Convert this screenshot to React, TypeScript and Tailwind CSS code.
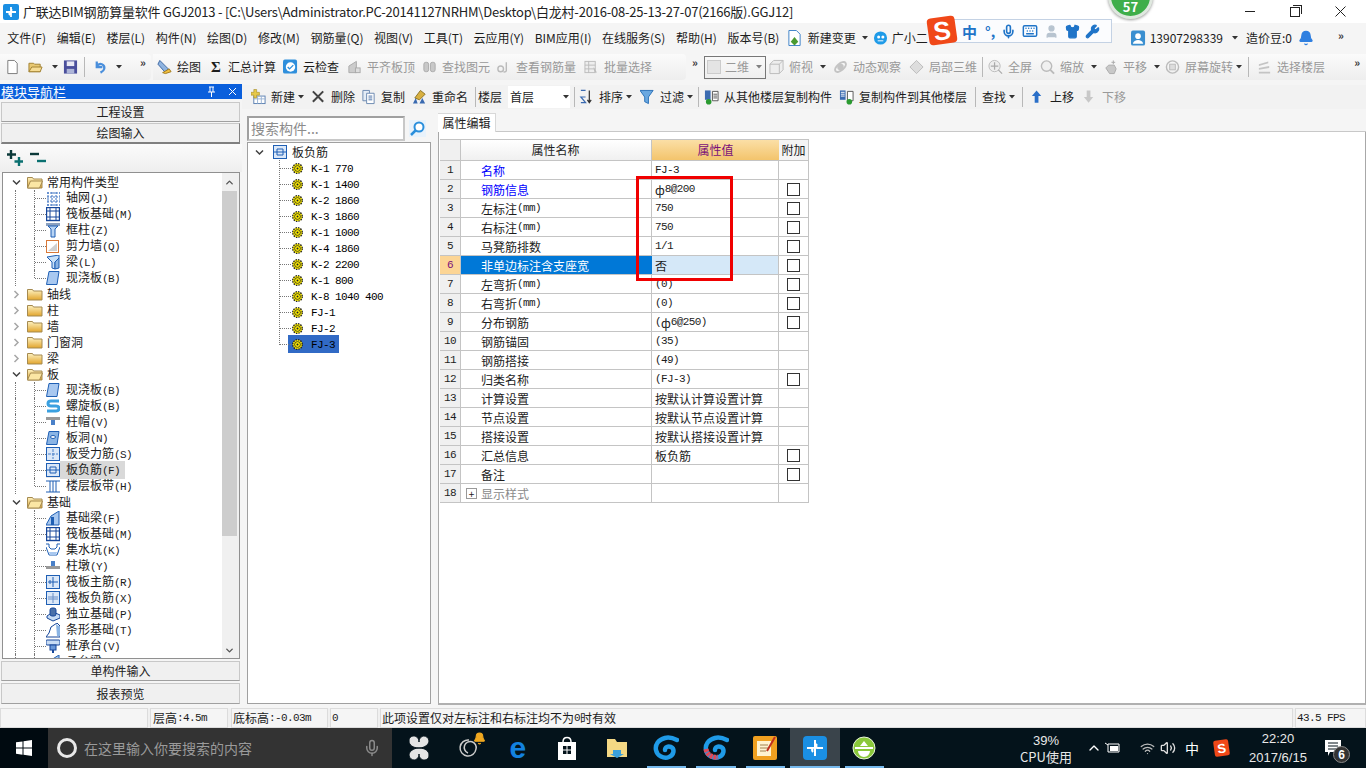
import type { ReactNode } from "react";
import { Bell, ChevronUp, Keyboard, Mic, Shirt, User, Volume2, Wifi, Wrench } from "lucide-react";

// SimSun-like text: CJK at 12px, latin squeezed to half-width cells
const Sim = ({ t }: { t: string }) => (
  <>
    {t.split(/([\x00-\x7f]+)/).map((part, i) =>
      /^[\x00-\x7f]+$/.test(part) ? (
        <span key={i} className="font-['Liberation_Mono',monospace] text-[11px] tracking-[-0.6px] whitespace-pre">
          {part}
        </span>
      ) : (
        <span key={i}>{part}</span>
      )
    )}
  </>
);

const Caret = ({ className = "" }: { className?: string }) => (
  <svg width="6" height="4" viewBox="0 0 6 4" className={`shrink-0 ${className}`}>
    <path d="M0 0h6L3 3.5z" fill="#333" />
  </svg>
);

const More = ({ className = "" }: { className?: string }) => (
  <span className={`text-[11px] font-bold leading-none text-[#333] ${className}`}>»</span>
);

const Sep = ({ className = "" }: { className?: string }) => (
  <div className={`h-[20px] shrink-0 border-l border-[#b8b8b8] ${className}`} />
);

/* ---------- small toolbar icons ---------- */
type IconName =
  | "new" | "open" | "save" | "undo" | "draw" | "cloud" | "align" | "find" | "view" | "batch"
  | "top" | "orbit" | "local" | "full" | "zoom" | "pan" | "rotate" | "floor"
  | "add" | "del" | "copy" | "rename" | "sort" | "filter" | "from" | "to" | "up" | "down" | "change" | "xiao" | "user";

const ToolIcon = ({ name }: { name: IconName }) => {
  const p: Record<IconName, ReactNode> = {
    new: <path d="M3 1h7l3 3v11H3z" fill="#fff" stroke="#777" />,
    open: <><path d="M1 13V4h5l1 1h6v8z" fill="#e8c872" stroke="#a08030" /><path d="M1 13l3-5h11l-2 5z" fill="#f6dc94" stroke="#a08030" /></>,
    save: <><rect x="1" y="1" width="14" height="14" fill="#4a4f9c" /><rect x="4" y="2" width="8" height="5" fill="#e8e8f4" /><rect x="4" y="10" width="8" height="5" fill="#aeb6d8" /></>,
    undo: <path d="M4 2v6h6M4 7c3-4 9-2 8 3-.4 2-2 3-4 4" fill="none" stroke="#4a8fdc" strokeWidth="2.4" />,
    draw: <><path d="M3 1l9 9-3 4-8-9z" fill="#8fb4e0" stroke="#3a64a0" /><path d="M6 14l7-4 2 3-6 2z" fill="#f2c040" stroke="#a07818" /></>,
    cloud: <><rect x="0" y="0" width="15" height="15" rx="2" fill="#2f8fdc" /><circle cx="8" cy="8" r="5" fill="#fff" /><path d="M5 8l2 2 4-4" fill="none" stroke="#2f8fdc" strokeWidth="1.5" /></>,
    align: <><path d="M2 14V7l8-5v12z" fill="#ccc" stroke="#aaa" /><rect x="9" y="9" width="5" height="5" fill="#ddd" stroke="#aaa" /></>,
    find: <><rect x="2" y="3" width="5" height="10" rx="2" fill="#c8c8c8" stroke="#aaa" /><rect x="9" y="3" width="5" height="10" rx="2" fill="#c8c8c8" stroke="#aaa" /></>,
    view: <><circle cx="5" cy="10" r="3" fill="none" stroke="#bbb" strokeWidth="1.5" /><path d="M11 3v9a2 2 0 01-3 1" fill="none" stroke="#bbb" strokeWidth="1.5" /></>,
    batch: <><rect x="1" y="2" width="11" height="12" fill="#eee" stroke="#bbb" /><path d="M1 6h11M1 10h11M5 2v12" stroke="#bbb" /><path d="M10 8l4 6-3-1z" fill="#bbb" /></>,
    top: <><path d="M1 5l4-4h10v10l-4 4H1z" fill="#eee" stroke="#bbb" /><path d="M1 5h10v10M11 5l4-4" fill="none" stroke="#bbb" /></>,
    orbit: <><ellipse cx="8" cy="8" rx="7" ry="3.6" transform="rotate(-40 8 8)" fill="none" stroke="#c4c4c4" strokeWidth="2" /><circle cx="8" cy="8" r="3.5" fill="#c4c4c4" /></>,
    local: <path d="M8 1l7 7-7 7-7-7z" fill="#ddd" stroke="#bbb" />,
    full: <><circle cx="7" cy="7" r="6" fill="#eee" stroke="#bbb" /><path d="M7 3v8M3 7h8M11 11l4 4" stroke="#aaa" strokeWidth="1.3" /></>,
    zoom: <><circle cx="7" cy="7" r="5.5" fill="#f0f0f0" stroke="#bbb" strokeWidth="1.5" /><path d="M11 11l4 4" stroke="#bbb" strokeWidth="2" /></>,
    pan: <><path d="M3 9l3-3 6 0 2 4-2 5H7z" fill="#c8c8c8" stroke="#aaa" /><path d="M11 1v4M9 3h4" stroke="#aaa" /></>,
    rotate: <><circle cx="8" cy="8" r="6.5" fill="none" stroke="#bbb" strokeWidth="1.5" /><rect x="5" y="5" width="6" height="6" fill="#ddd" stroke="#bbb" /></>,
    floor: <path d="M2 5l10-3v2L2 7zM2 9l11-2v2L2 11zM2 13h12v2H2z" fill="#c4c4c4" />,
    add: <><rect x="3" y="7" width="12" height="8" fill="#fff" stroke="#5a7fb0" /><path d="M3 10h12M7 7v8M11 7v8" stroke="#9ab4d4" /><path d="M3 0h3v3h3v3H6v3H3V6H0V3h3z" fill="#e6c84a" stroke="#a08820" strokeWidth=".6" /></>,
    del: <path d="M2 2l11 11M13 2L2 13" stroke="#444" strokeWidth="2.2" />,
    copy: <><path d="M2 1h7v11H2z" fill="#e4ecf6" stroke="#6a88b0" /><path d="M6 4h8v11H6z" fill="#fff" stroke="#6a88b0" /><path d="M8 7h4M8 9h4M8 11h4" stroke="#4a70a8" /></>,
    rename: <><path d="M3 9L9 1l5 4-6 6z" fill="#d8b040" stroke="#8a7020" /><path d="M1 15l3-6 2 6zM8 15l3-6 3 6z" fill="#3a6ab0" /></>,
    sort: <><path d="M2 1h5M2 14h5L2 8h5" fill="none" stroke="#3a6ab0" strokeWidth="1.3" /><path d="M11 1v13m-2-3l2 3 2-3" fill="none" stroke="#333" strokeWidth="1.3" /></>,
    filter: <path d="M0 1h14L9 8v7l-4-2V8z" fill="#6aa8e0" stroke="#2a70b8" />,
    from: <><path d="M1 1h6v10H1z" fill="#3a6ab0" /><path d="M9 2h6v10H9z" fill="#fff" stroke="#555" /><path d="M10 5h4M10 7h4M10 9h4" stroke="#555" /><circle cx="5" cy="13" r="3" fill="#2a9a30" /></>,
    to: <><path d="M1 1h6v10H1z" fill="#3a6ab0" /><path d="M9 2h6v10H9z" fill="#fff" stroke="#555" /><path d="M2 3h4M2 5h4M2 7h4" stroke="#fff" /><circle cx="11" cy="13" r="3" fill="#2a9a30" /></>,
    up: <path d="M7 1l5 6H9v7H5V7H2z" fill="#2a6fc8" />,
    down: <path d="M5 1h4v7h3l-5 6-5-6h3z" fill="#c8c8c8" />,
    change: <><path d="M2 0h8l4 4v12H2z" fill="#fff" stroke="#3a7fc8" /><path d="M8 7l4 5-4 4-4-4z" fill="#4a9a30" /></>,
    xiao: <><circle cx="8" cy="8" r="7" fill="#1f9be8" /><circle cx="6" cy="7" r="1.6" fill="#fff" /><circle cx="10.5" cy="7" r="1.6" fill="#fff" /><path d="M5 11h6" stroke="#fff" /></>,
    user: <><rect width="15" height="16" rx="2" fill="#3a8fd0" /><circle cx="7.5" cy="6" r="3" fill="#fff" /><path d="M2 14c1-5 10-5 11 0z" fill="#fff" /></>,
  };
  return (
    <svg width="16" height="16" viewBox="0 0 16 16" className="h-[16px] w-[15px] shrink-0">
      {p[name]}
    </svg>
  );
};

const Tb = ({
  icon, label, dim, caret, wide, className = "",
}: { icon?: IconName; label?: string; dim?: boolean; caret?: boolean; wide?: boolean; className?: string }) => (
  <div className={`flex h-full shrink-0 items-center ${className}`}>
    {icon && <ToolIcon name={icon} />}
    {label && (
      <span className={`${icon ? "ml-[5px]" : ""} whitespace-nowrap ${dim ? "text-[#999]" : "text-[#1c1c1c]"}`}>
        {label}
      </span>
    )}
    {caret && <Caret className={wide ? "ml-[7px]" : "ml-[3px]"} />}
  </div>
);

/* ---------- tree icons ---------- */
const Folder = ({ open }: { open?: boolean }) => (
  <svg width="16" height="14" viewBox="0 0 16 14" className="shrink-0">
    <defs>
      <linearGradient id="fld" x1="0" y1="0" x2="0" y2="1">
        <stop offset="0" stopColor="#fdf2c2" />
        <stop offset="1" stopColor="#e2a52c" />
      </linearGradient>
    </defs>
    <path d="M.5 13V2.5h5l1 1.5h8.500V13z" fill="url(#fld)" stroke="#a58a50" />
    {open && <path d="M.5 13l3-7h12l-3 7z" fill="#fbe6a4" stroke="#a58a50" />}
  </svg>
);

type TreeIcon =
  | "grid" | "raft" | "col" | "wall" | "beam" | "slab" | "spiral" | "cap" | "hole" | "rs" | "rf" | "band"
  | "fbeam" | "pit" | "pier" | "rm" | "rn" | "iso" | "strip" | "pile";

const TIcon = ({ name }: { name: TreeIcon }) => {
  const b = "#1f5fb4";
  const box = (inner: ReactNode) => (
    <>
      <rect x=".5" y=".5" width="13" height="13" fill="#dbe8f8" stroke={b} />
      {inner}
    </>
  );
  const p: Record<TreeIcon, ReactNode> = {
    grid: <path d="M1 2h13M1 6h13M1 10h13M1 14h13M2 1v14M6 1v14M10 1v14M14 1v14" stroke="#3a70c0" strokeDasharray="2 1" fill="none" />,
    raft: <><rect x=".5" y=".5" width="13" height="13" fill="#fff" stroke="#17479a" strokeWidth="1.4" /><path d="M4 1v13M10 1v13M1 4h13M1 10h13" stroke="#17479a" /></>,
    col: <><rect x="0" y="0" width="14" height="3" fill="#8aa0c0" /><path d="M2 3h10L9 6v8H5V6z" fill="#b8d4f4" stroke={b} /></>,
    wall: <><rect x=".5" y="1.500" width="12" height="12" fill="#fff" stroke="#d87838" /><path d="M2 12l9-8v8z" fill="#bbb" opacity=".7" /></>,
    beam: <><path d="M1 2l12-2v3L9 7v7l-3-1V7z" fill="#c8e0f8" stroke={b} /><path d="M9 7l4-4v10l-4 1z" fill="#8ab4e4" stroke={b} /></>,
    slab: <path d="M3 .5h10l-2 13H.5z" fill="#a8c8f0" stroke={b} />,
    spiral: <path d="M13 2H5C1 2 1 7 5 7h5c4 0 4 5 0 5H1" fill="none" stroke="#3aa0e0" strokeWidth="3" />,
    cap: <><rect x="0" y="2" width="14" height="3" fill="#999" /><rect x="5" y="5" width="4" height="5" fill="#4a80c8" /></>,
    hole: <><path d="M3 .5h10l-2 13H.5z" fill="#8ab4e4" stroke={b} /><ellipse cx="7" cy="6" rx="2.500" ry="1.500" fill="#fff" stroke={b} /></>,
    rs: box(<path d="M2 7h10M7 2v10" stroke="#4a80c8" strokeDasharray="3 1" />),
    rf: box(<path d="M1 7h12M4 4h6v6H4z" stroke={b} fill="none" />),
    band: <path d="M0 2h14M0 13h14M4 2v11M10 2v11M7 2v11" stroke={b} fill="none" />,
    fbeam: <><path d="M0 14l5-9 8-5v14z" fill="#a8c8f0" stroke={b} /><path d="M5 14V6h3v8z" fill="#1f5fb4" /></>,
    pit: <><path d="M0 1h3v3l2 2h4l2-2V1h3M0 4l3 8h8l3-8" fill="none" stroke={b} /><path d="M3 9h8l-1 3H4z" fill="#a8c8f0" /></>,
    pier: <><rect x="5" y="2" width="4" height="5" fill="#4a80c8" /><rect x="0" y="7" width="14" height="3" fill="#999" /></>,
    rm: box(<path d="M7 2v10M2 7h10M4 5v4" stroke={b} />),
    rn: box(<path d="M7 2v10M2 6h10M2 8h10" stroke="#6a90c8" />),
    iso: <><path d="M1 9l6-4 7 3v3l-7 3-6-3z" fill="#c8dcf4" stroke="#17479a" /><rect x="4" y="1" width="6" height="8" rx="2" fill="#4a70a8" stroke="#17479a" /></>,
    strip: <><path d="M0 14l3-4 2-6 6-4 3 3v11z" fill="#fff" stroke="#17479a" /><path d="M10 1l4 3v9h-3z" fill="#8ab4e4" /></>,
    pile: <><rect x="0" y="1" width="14" height="5" rx="1" fill="#c8dcf4" stroke="#17479a" /><rect x="4" y="6" width="6" height="5" fill="#6a98d8" stroke="#17479a" /><rect x="6" y="11" width="2" height="3" fill="#17479a" /></>,
  };
  return (
    <svg width="14" height="15" viewBox="0 0 14 15" className="shrink-0">
      {p[name]}
    </svg>
  );
};

const Gear = () => (
  <svg width="11" height="11" viewBox="0 0 11 11" className="shrink-0">
    <circle cx="5.500" cy="5.500" r="4.800" fill="#ffef00" stroke="#222" strokeWidth="1.300" strokeDasharray="1.500 1" />
    <circle cx="5.500" cy="5.500" r="2.900" fill="#ffef00" stroke="#222" strokeWidth=".8" />
    <circle cx="5.500" cy="5.500" r="1" fill="#222" />
  </svg>
);

const Chev = ({ open }: { open?: boolean }) => (
  <svg width="9" height="9" viewBox="0 0 9 9" className="shrink-0">
    {open ? (
      <path d="M1 2.500l3.500 3.500 3.500-3.500" fill="none" stroke="#404040" strokeWidth="1.500" />
    ) : (
      <path d="M2.500 1L6 4.500 2.500 8" fill="none" stroke="#a6a6a6" strokeWidth="1.500" />
    )}
  </svg>
);

/* ---------- data ---------- */
type NavRow =
  | { kind: "group"; label: string; open?: boolean }
  | { kind: "item"; label: string; icon: TreeIcon; last?: boolean; hot?: boolean };

const navRows: NavRow[] = [
  { kind: "group", label: "常用构件类型", open: true },
  { kind: "item", label: "轴网(J)", icon: "grid" },
  { kind: "item", label: "筏板基础(M)", icon: "raft" },
  { kind: "item", label: "框柱(Z)", icon: "col" },
  { kind: "item", label: "剪力墙(Q)", icon: "wall" },
  { kind: "item", label: "梁(L)", icon: "beam" },
  { kind: "item", label: "现浇板(B)", icon: "slab", last: true },
  { kind: "group", label: "轴线" },
  { kind: "group", label: "柱" },
  { kind: "group", label: "墙" },
  { kind: "group", label: "门窗洞" },
  { kind: "group", label: "梁" },
  { kind: "group", label: "板", open: true },
  { kind: "item", label: "现浇板(B)", icon: "slab" },
  { kind: "item", label: "螺旋板(B)", icon: "spiral" },
  { kind: "item", label: "柱帽(V)", icon: "cap" },
  { kind: "item", label: "板洞(N)", icon: "hole" },
  { kind: "item", label: "板受力筋(S)", icon: "rs" },
  { kind: "item", label: "板负筋(F)", icon: "rf", hot: true },
  { kind: "item", label: "楼层板带(H)", icon: "band", last: true },
  { kind: "group", label: "基础", open: true },
  { kind: "item", label: "基础梁(F)", icon: "fbeam" },
  { kind: "item", label: "筏板基础(M)", icon: "raft" },
  { kind: "item", label: "集水坑(K)", icon: "pit" },
  { kind: "item", label: "柱墩(Y)", icon: "pier" },
  { kind: "item", label: "筏板主筋(R)", icon: "rm" },
  { kind: "item", label: "筏板负筋(X)", icon: "rn" },
  { kind: "item", label: "独立基础(P)", icon: "iso" },
  { kind: "item", label: "条形基础(T)", icon: "strip" },
  { kind: "item", label: "桩承台(V)", icon: "pile" },
  { kind: "item", label: "承台梁(F)", icon: "fbeam" },
];

const parts = [
  "K-1 770", "K-1 1400", "K-2 1860", "K-3 1860", "K-1 1000", "K-4 1860",
  "K-2 2200", "K-1 800", "K-8 1040 400", "FJ-1", "FJ-2", "FJ-3",
];

const props: { name: string; value?: string; tone?: "blue" | "gray"; check?: boolean }[] = [
  { name: "名称", value: "FJ-3", tone: "blue" },
  { name: "钢筋信息", value: "ф8@200", tone: "blue", check: true },
  { name: "左标注(mm)", value: "750", check: true },
  { name: "右标注(mm)", value: "750", check: true },
  { name: "马凳筋排数", value: "1/1", check: true },
  { name: "非单边标注含支座宽", value: "否", check: true },
  { name: "左弯折(mm)", value: "(0)", check: true },
  { name: "右弯折(mm)", value: "(0)", check: true },
  { name: "分布钢筋", value: "(ф6@250)", check: true },
  { name: "钢筋锚固", value: "(35)" },
  { name: "钢筋搭接", value: "(49)" },
  { name: "归类名称", value: "(FJ-3)", check: true },
  { name: "计算设置", value: "按默认计算设置计算" },
  { name: "节点设置", value: "按默认节点设置计算" },
  { name: "搭接设置", value: "按默认搭接设置计算" },
  { name: "汇总信息", value: "板负筋", check: true },
  { name: "备注", check: true },
  { name: "显示样式", tone: "gray" },
];

const menus = ["文件(F)", "编辑(E)", "楼层(L)", "构件(N)", "绘图(D)", "修改(M)", "钢筋量(Q)", "视图(V)", "工具(T)", "云应用(Y)", "BIM应用(I)", "在线服务(S)", "帮助(H)", "版本号(B)"];

const NavButton = ({ label, pressed, className = "" }: { label: string; pressed?: boolean; className?: string }) => (
  <div
    className={`mx-[1px] flex w-[239px] shrink-0 items-center justify-center border border-[#c8c8c8] bg-[#f0f0f0] text-[12px] text-[#222] ${
      pressed ? "border-b-2 border-b-[#808080] border-r-[#808080]" : "border-b-[#a0a0a0]"
    } ${className}`}
  >
    {label}
  </div>
);

const Tile = ({ children, active, bar }: { children: ReactNode; active?: boolean; bar?: boolean }) => (
  <div className={`relative flex h-full w-[49.5px] shrink-0 items-center justify-center ${active ? "bg-[#3a444b]" : ""}`}>
    {children}
    {bar && <div className={`absolute bottom-0 h-[2px] bg-[#76b9ed] ${active ? "left-0 right-0" : "left-[5px] right-[5px]"}`} />}
  </div>
);

const Swirl = ({ stripe }: { stripe?: boolean }) => (
  <svg width="26" height="26" viewBox="0 0 26 26">
    <path d="M24 5c-4-2-8-3-12-2C5 5 2 10 3 15c1 6 8 9 13 7 5-2 6-8 2-10-3-1-6 0-6 3" fill="none" stroke="#1f9be8" strokeWidth="4.500" strokeLinecap="round" />
    {stripe && <path d="M3 14c1 6 7 9 12 8" fill="none" stroke="#e04858" strokeWidth="5" strokeDasharray="3 .8" />}
  </svg>
);

export default function App() {
  return (
    <div className="relative flex h-[768px] w-[1366px] flex-col overflow-hidden bg-[#f5f5f5] font-['Noto_Sans_CJK_SC',sans-serif] text-[12px] leading-none text-[#1c1c1c]">
      {/* title bar */}
      <div className="flex h-[23px] shrink-0 items-center bg-white pl-[3px]">
        <svg width="16" height="16" viewBox="0 0 16 16" className="shrink-0">
          <rect width="16" height="16" rx="2" fill="#1a8fe3" />
          <path d="M8 3v10M3 8h4a2 2 0 000 3M13 8H9a2 2 0 010-3" fill="none" stroke="#fff" strokeWidth="1.800" />
        </svg>
        <span className="ml-[4px] whitespace-nowrap text-[13px] tracking-[-0.215px] text-[#222]">
          广联达BIM钢筋算量软件 GGJ2013 - [C:\Users\Administrator.PC-20141127NRHM\Desktop\白龙村-2016-08-25-13-27-07(2166版).GGJ12]
        </span>
        <div className="ml-auto flex h-full items-center">
          <div className="h-[1px] w-[10px] bg-[#222]" />
          <div className="relative ml-[35px] h-[10px] w-[10px] border border-[#222]">
            <div className="absolute -right-[3px] -top-[3px] h-[9px] w-[9px] border-r border-t border-[#222]" />
          </div>
          <svg width="11" height="11" viewBox="0 0 11 11" className="ml-[35px] mr-[20px]">
            <path d="M.5.5l10 10M10.500.5l-10 10" stroke="#222" />
          </svg>
        </div>
      </div>

      {/* menu bar */}
      <div className="flex h-[31px] shrink-0 items-center pb-[2px] pl-[2px]">
        {menus.map((m) => (
          <span key={m} className="shrink-0 whitespace-nowrap px-[5.300px]">
            {m}
          </span>
        ))}
        <div className="ml-[2px] flex items-center">
          <ToolIcon name="change" />
          <span className="ml-[6px] whitespace-nowrap">新建变更</span>
          <Caret className="ml-[6px]" />
          <div className="ml-[5px]">
            <ToolIcon name="xiao" />
          </div>
          <span className="ml-[4px] whitespace-nowrap">广小二</span>
        </div>
        <div className="ml-[203px] flex items-center">
          <ToolIcon name="user" />
          <span className="ml-[4px] whitespace-nowrap">13907298339</span>
          <Caret className="ml-[9px]" />
          <span className="ml-[8px] whitespace-nowrap">造价豆:0</span>
          <Bell size={16} className="ml-[6px] fill-[#2f7fe0] text-[#2f7fe0]" />
        </div>
        <More className="ml-[24px] self-start pt-[7px]" />
      </div>

      {/* main toolbar */}
      <div className="flex h-[28px] shrink-0 items-start">
        <div className="flex h-[26px] w-[151px] shrink-0 items-center rounded-r-[4px] bg-[linear-gradient(#fbfbfb,#eeeeee)] pl-[5px]">
          <Tb icon="new" className="w-[23px]" />
          <Tb icon="open" className="w-[24px]" />
          <div className="w-[11px]"><Caret /></div>
          <Tb icon="save" className="w-[21px]" />
          <Sep className="mr-[8px]" />
          <Tb icon="undo" className="w-[23px]" />
          <div className="w-[24px]"><Caret /></div>
          <More className="self-start pt-[3px]" />
        </div>
        <div className="ml-[2px] flex h-[26px] w-[533px] shrink-0 items-center rounded-r-[4px] bg-[linear-gradient(#fbfbfb,#eeeeee)] pl-[4px]">
          <Tb icon="draw" label="绘图" className="w-[53px]" />
          <div className="flex h-full w-[73px] shrink-0 items-center">
            <span className="w-[18px] pl-[1px] font-['Liberation_Serif',serif] text-[15px] font-bold">Σ</span>
            <span>汇总计算</span>
          </div>
          <Tb icon="cloud" label="云检查" className="w-[64px]" />
          <Tb icon="align" label="平齐板顶" dim className="w-[75px]" />
          <Tb icon="find" label="查找图元" dim className="w-[74px]" />
          <Tb icon="view" label="查看钢筋量" dim className="w-[88px]" />
          <Tb icon="batch" label="批量选择" dim className="w-[67px]" />
        </div>
        <More className="ml-[6px] w-[12px] pt-[3px]" />
        <div className="flex h-[26px] flex-1 items-center bg-[linear-gradient(#fbfbfb,#eeeeee)]">
          <div className="flex h-[23px] w-[62px] shrink-0 items-center border border-[#777] pl-[2px]">
            <div className="h-[14px] w-[14px] border border-[#ccc] bg-[#e4e4e4]" />
            <span className="ml-[4px] text-[#999]">二维</span>
            <Caret className="ml-[7px] opacity-60" />
          </div>
          <Tb icon="top" label="俯视" dim caret wide className="ml-[3px] w-[64px]" />
          <Tb icon="orbit" label="动态观察" dim className="w-[76px]" />
          <Tb icon="local" label="局部三维" dim className="w-[73px]" />
          <Sep className="mr-[5px]" />
          <Tb icon="full" label="全屏" dim className="w-[52px]" />
          <Tb icon="zoom" label="缩放" dim caret wide className="w-[63px]" />
          <Tb icon="pan" label="平移" dim caret wide className="w-[62px]" />
          <Tb icon="rotate" label="屏幕旋转" dim caret className="w-[83px]" />
          <Sep className="mr-[8px]" />
          <Tb icon="floor" label="选择楼层" dim />
          <More className="ml-auto mr-[6px] self-start pt-[3px]" />
        </div>
      </div>

      {/* body */}
      <div className="flex h-[626px] shrink-0">
        {/* module nav */}
        <div className="flex w-[242px] shrink-0 flex-col pt-[2px]">
          <div className="flex h-[15px] shrink-0 items-center bg-[#0a5fdc] pl-[1px] text-[13px] text-white">
            <span>模块导航栏</span>
            <svg width="9" height="11" viewBox="0 0 9 11" className="ml-auto mr-[12px]">
              <path d="M2 1h5M3 1v5M6 1v5M1 6h7M4.500 6v5" stroke="#fff" />
            </svg>
            <svg width="9" height="9" viewBox="0 0 9 9" className="mr-[5px]">
              <path d="M1 1l7 7M8 1L1 8" stroke="#fff" />
            </svg>
          </div>
          <NavButton label="工程设置" className="mt-[3px] h-[20px]" />
          <NavButton label="绘图输入" pressed className="mt-[1px] h-[21px]" />
          <div className="flex h-[28px] shrink-0 items-center gap-[7px] bg-[linear-gradient(#fbfbfb,#eeeeee)] pl-[7px]">
            <svg width="16" height="16" viewBox="0 0 16 16">
              <path d="M4 0v9M0 4.500h9" stroke="#0c3a3a" strokeWidth="2.400" />
              <path d="M12 7v9M7.500 11.500h8.500" stroke="#0a7070" strokeWidth="2.400" />
            </svg>
            <svg width="16" height="14" viewBox="0 0 16 14">
              <path d="M0 3h9" stroke="#0c3a3a" strokeWidth="2.400" />
              <path d="M7 10h9" stroke="#0a7070" strokeWidth="2.400" />
            </svg>
          </div>
          <div className="relative ml-[2px] flex h-[487px] w-[238px] shrink-0 border border-[#909090] bg-white">
            <div className="flex-1 overflow-hidden pt-[1px]">
              {navRows.map((r, i) =>
                r.kind === "group" ? (
                  <div key={i} className="relative flex h-[16px] items-center">
                    <div className="ml-[9px] flex w-[15px] shrink-0 items-center">
                      <Chev open={r.open} />
                    </div>
                    <Folder open={r.open} />
                    <span className="ml-[4px] whitespace-nowrap">{r.label}</span>
                  </div>
                ) : (
                  <div key={i} className="relative flex h-[16px] items-center">
                    <div className="absolute bottom-0 left-[12px] top-0 border-l border-dotted border-[#777]" />
                    <div className={`absolute left-[31px] top-0 border-l border-dotted border-[#777] ${r.last ? "h-[8px]" : "h-[16px]"}`} />
                    <div className="absolute left-[32px] top-[8px] w-[11px] border-t border-dotted border-[#777]" />
                    <div className={`ml-[43px] ${r.hot ? "bg-[#e6e6e6]" : ""}`}>
                      <TIcon name={r.icon} />
                    </div>
                    <span className={`whitespace-nowrap pl-[6px] pr-[5px] leading-[16px] ${r.hot ? "bg-[#d9d9d9]" : ""}`}>
                      <Sim t={r.label} />
                    </span>
                  </div>
                )
              )}
            </div>
            {/* scrollbar */}
            <div className="flex w-[15px] shrink-0 flex-col bg-[#f0f0f0]">
              <div className="flex h-[18px] shrink-0 items-center justify-center">
                <ChevronUp size={11} strokeWidth={3} className="text-[#555]" />
              </div>
              <div className="h-[345px] shrink-0 bg-[#cdcdcd]" />
              <div className="mt-auto flex h-[16px] shrink-0 items-center justify-center">
                <ChevronUp size={11} strokeWidth={3} className="rotate-180 text-[#555]" />
              </div>
            </div>
            <div className="w-[2px] shrink-0 bg-[#f0f0f0]" />
          </div>
          <NavButton label="单构件输入" className="mt-[2px] h-[20px]" />
          <NavButton label="报表预览" className="mt-[2px] h-[21px]" />
        </div>

        {/* right side */}
        <div className="flex min-w-0 flex-1 flex-col">
          {/* component toolbar */}
          <div className="mt-[3px] flex h-[24px] shrink-0 items-center bg-[#f2f2f2] pl-[9px]">
            <Tb icon="add" label="新建" caret className="w-[60px]" />
            <Tb icon="del" label="删除" className="w-[50px]" />
            <Tb icon="copy" label="复制" className="w-[51px]" />
            <Tb icon="rename" label="重命名" className="w-[63px]" />
            <Sep className="mr-[2px]" />
            <span className="w-[30px] shrink-0">楼层</span>
            <div className="flex h-[22px] w-[62px] shrink-0 items-center bg-white pl-[2px]">
              <span>首层</span>
              <Caret className="ml-[29px]" />
            </div>
            <Sep className="ml-[4px] mr-[4px]" />
            <Tb icon="sort" label="排序" caret className="w-[61px]" />
            <Tb icon="filter" label="过滤" caret className="w-[58px]" />
            <Sep className="mr-[5px]" />
            <Tb icon="from" label="从其他楼层复制构件" className="w-[135px]" />
            <Tb icon="to" label="复制构件到其他楼层" className="w-[136px]" />
            <Sep className="mr-[6px]" />
            <Tb label="查找" caret className="w-[40px]" />
            <Sep className="mr-[7px]" />
            <Tb icon="up" label="上移" className="w-[52px]" />
            <Tb icon="down" label="下移" dim />
          </div>

          <div className="flex min-h-0 flex-1">
            {/* component list */}
            <div className="ml-[5px] flex w-[184px] shrink-0 flex-col pt-[6px]">
              <div className="flex h-[26px] shrink-0 items-center">
                <div className="flex h-[25px] w-[158px] shrink-0 items-center border-2 border-[#a0a0a0] border-b-[#c8c8c8] border-r-[#c8c8c8] bg-white pl-[2px] text-[14px] text-[#8c8c8c]">
                  搜索构件...
                </div>
                <svg width="17" height="17" viewBox="0 0 17 17" className="ml-[4px]">
                  <rect width="17" height="17" fill="#e8f2fb" />
                  <circle cx="10" cy="7" r="4.500" fill="#fff" stroke="#2a8fdc" strokeWidth="2" />
                  <path d="M7 10l-5 5" stroke="#2a8fdc" strokeWidth="2.500" />
                </svg>
              </div>
              <div className="relative mt-[1px] h-[562px] w-[184px] shrink-0 border border-[#a0a0a0] bg-white pt-[1px]">
                <div className="absolute left-[31px] top-[17px] h-[185px] border-l border-dotted border-[#777]" />
                <div className="flex h-[16px] items-center">
                  <div className="ml-[7px] w-[18px] shrink-0"><Chev open /></div>
                  <TIcon name="rf" />
                  <span className="ml-[5px]">板负筋</span>
                </div>
                {parts.map((p, i) => (
                  <div key={p + i} className="relative flex h-[16px] items-center">
                    <div className="absolute left-[32px] top-[8px] w-[11px] border-t border-dotted border-[#777]" />
                    <div className={`ml-[40px] flex items-center pl-[4px] ${i === 11 ? "bg-[#316ac5]" : ""}`}>
                      <div className="flex h-[16px] items-center"><Gear /></div>
                      <span className="whitespace-pre pl-[8px] pr-[4px] leading-[16px] text-black">
                        <Sim t={p} />
                      </span>
                    </div>
                  </div>
                ))}
              </div>
            </div>

            {/* property panel */}
            <div className="ml-[7px] flex min-w-0 flex-1 flex-col pt-[4px]">
              <div className="flex h-[19px] shrink-0 items-end border-b border-[#c8c8c8]">
                <div className="relative top-[1px] flex h-[19px] w-[58px] items-center justify-center border-r border-t border-[#d8d8d8] bg-white text-[12px]">
                  属性编辑
                </div>
              </div>
              <div className="mb-[3px] flex-1 border-b-2 border-l border-r border-[#a8a8a8] border-b-[#b0b0b0] bg-white pl-[1px] pt-[7px]">
                <div className="w-[369px]">
                  <div className="flex h-[22px] border-y border-[#c4c4c4]">
                    <div className="w-[21px] border-r border-[#c4c4c4] bg-[#f0f0f0]" />
                    <div className="flex w-[191px] items-center justify-center border-r border-[#c4c4c4] bg-[linear-gradient(#fff,#f0f0f0)] pr-[1px] text-[#222]">属性名称</div>
                    <div className="flex w-[127px] items-center justify-center bg-[linear-gradient(#fbdfa6,#f3c46c)] text-[#7a107a]">属性值</div>
                    <div className="flex w-[30px] items-center justify-center border-r border-[#c4c4c4] bg-[#f4f4f4]">附加</div>
                  </div>
                  {props.map((row, i) => {
                    const hot = i === 5;
                    return (
                      <div key={row.name} className="flex h-[19px] border-b border-[#c4c4c4]">
                        <div className={`flex w-[21px] shrink-0 items-center justify-center border-r border-[#c4c4c4] pt-[1px] ${hot ? "bg-[#fcd595] text-[#7a107a]" : "bg-[#f0f0f0]"}`}>
                          <Sim t={String(i + 1)} />
                        </div>
                        <div className={`relative flex w-[191px] shrink-0 items-center pl-[20px] pt-[1px] ${hot ? "bg-[#0078d7] text-white" : "border-r border-[#c4c4c4]"} ${row.tone === "blue" ? "text-[#0000ff]" : ""} ${row.tone === "gray" ? "text-[#8a8a8a]" : ""}`}>
                          {row.tone === "gray" && (
                            <div className="absolute left-[5px] flex h-[11px] w-[11px] items-center justify-center border border-[#999] text-[10px] leading-none text-[#222]">+</div>
                          )}
                          <Sim t={row.name} />
                        </div>
                        <div className={`flex w-[127px] shrink-0 items-center whitespace-pre border-r border-[#c4c4c4] pl-[3px] pt-[1px] ${hot ? "bg-[#d5e8f8]" : ""}`}>
                          {row.value && <Sim t={row.value} />}
                        </div>
                        <div className="flex w-[30px] shrink-0 items-center justify-center border-r border-[#c4c4c4]">
                          {row.check && <div className="h-[13px] w-[13px] border border-[#333] bg-white" />}
                        </div>
                      </div>
                    );
                  })}
                </div>
              </div>
            </div>
          </div>
        </div>
      </div>

      {/* status bar */}
      <div className="flex h-[20px] shrink-0 gap-[2px] bg-[#f0f0f0]">
        <div className="w-[148px] border border-[#dcdcdc] bg-[#f5f5f5]" />
        <div className="flex w-[78px] items-center border border-[#dcdcdc] bg-[#f5f5f5] pl-[2px]"><Sim t="层高:4.5m" /></div>
        <div className="ml-[1px] flex w-[97px] items-center border border-[#dcdcdc] bg-[#f5f5f5] pl-[1px]"><Sim t="底标高:-0.03m" /></div>
        <div className="flex w-[48px] items-center border border-[#dcdcdc] bg-[#f5f5f5] pl-[1px]"><Sim t="0" /></div>
        <div className="flex w-[913px] items-center border border-[#dcdcdc] bg-[#f5f5f5] pl-[1px]"><Sim t="此项设置仅对左标注和右标注均不为0时有效" /></div>
        <div className="flex flex-1 items-center border border-[#dcdcdc] bg-[#f5f5f5] pl-[1px]"><Sim t="43.5 FPS" /></div>
      </div>

      {/* taskbar */}
      <div className="flex h-[40px] shrink-0 items-center bg-[#04131b] text-white">
        <div className="flex h-full w-[48px] shrink-0 items-center justify-center bg-[#000a10]">
          <svg width="16" height="16" viewBox="0 0 16 16">
            <path d="M0 2.300l6.500-.9v6.200H0zM7.500 1.300L16 0v7.600H7.500zM0 8.500h6.500v6.200L0 13.800zM7.500 8.500H16V16l-8.500-1.200z" fill="#fff" />
          </svg>
        </div>
        <div className="flex h-full w-[344px] shrink-0 items-center bg-[#333] pl-[9px]">
          <div className="h-[20px] w-[20px] rounded-full border-[3px] border-[#e8e8e8]" />
          <span className="ml-[7px] text-[14px] text-[#9a9a9a]">在这里输入你要搜索的内容</span>
          <Mic size={18} className="ml-auto mr-[11px] text-[#8a8a8a]" />
        </div>
        <div className="ml-[2px] flex h-full items-center">
          <Tile>
            <svg width="22" height="26" viewBox="0 0 22 26">
              <path d="M11 13C5 13 1 10 1 6s3-5 5-5 5 2 5 6c0-4 3-6 5-6s5 2 5 5-4 7-10 7c6 0 10 3 10 7s-3 5-5 5-5-2-5-6c0 4-3 6-5 6s-5-2-5-5 4-7 10-7z" fill="#e4e4e4" stroke="#04131b" />
            </svg>
          </Tile>
          <Tile>
            <div className="relative">
              <svg width="22" height="22" viewBox="0 0 22 22">
                <path d="M12 3a8 8 0 10 7 9 6 6 0 10-8 4 4 0 102-7" fill="none" stroke="#ccc" strokeWidth="1.500" />
              </svg>
              <Bell size={13} className="absolute -right-[7px] -top-[5px] fill-[#f0a820] text-[#f0a820]" />
            </div>
          </Tile>
          <Tile>
            <span className="font-['Liberation_Sans',sans-serif] text-[30px] font-bold leading-none text-[#1382e0]">e</span>
          </Tile>
          <Tile>
            <svg width="20" height="24" viewBox="0 0 20 24">
              <path d="M1 6h18v18H1z" fill="#fff" />
              <path d="M6 6c0-6 8-6 8 0" fill="none" stroke="#fff" strokeWidth="1.500" />
              <path d="M6 10h3.500v3.500H6zM10.500 10H14v3.500h-3.500zM6 14.500h3.500V18H6zM10.500 14.500H14V18h-3.500z" fill="#04131b" />
            </svg>
          </Tile>
          <Tile>
            <svg width="22" height="22" viewBox="0 0 22 22">
              <path d="M1 2h8l2 3h10v15H1z" fill="#f4d884" />
              <path d="M7 13h8v4h3l-7 4-7-4h3z" fill="#3aa0dc" />
            </svg>
          </Tile>
          <Tile bar><Swirl /></Tile>
          <Tile bar><Swirl stripe /></Tile>
          <Tile bar>
            <svg width="24" height="24" viewBox="0 0 24 24">
              <rect width="24" height="24" rx="2" fill="#f0a020" />
              <rect x="4" y="5" width="14" height="15" fill="#fff3d0" />
              <path d="M7 9h8M7 12h8M7 15h6" stroke="#a08050" />
              <path d="M22 1l-8 14" stroke="#c03020" strokeWidth="2" />
            </svg>
          </Tile>
          <Tile active bar>
            <svg width="24" height="24" viewBox="0 0 24 24">
              <rect width="24" height="24" rx="4" fill="#1a8fe3" />
              <path d="M12 4v16M4 12h6a3 3 0 000 4M20 12h-6a3 3 0 010-4" fill="none" stroke="#fff" strokeWidth="2" />
            </svg>
          </Tile>
          <Tile bar>
            <svg width="24" height="28" viewBox="0 0 24 28">
              <circle cx="12" cy="14" r="11" fill="#8ac83a" stroke="#e8f4d8" />
              <path d="M3 14h18" stroke="#fff" strokeWidth="2" />
              <path d="M12 7l4 5H8zM6 17h12a6 6 0 01-12 0z" fill="#fff" />
            </svg>
          </Tile>
        </div>
        <div className="ml-auto flex h-full items-center">
          <div className="flex w-[60px] flex-col items-center gap-[3px] text-[13px] text-[#e8e8e8]">
            <span className="font-['Liberation_Sans',sans-serif]">39%</span>
            <span className="whitespace-nowrap">CPU使用</span>
          </div>
          <ChevronUp size={16} className="ml-[10px] text-white" />
          <svg width="16" height="14" viewBox="0 0 16 14" className="ml-[2px]">
            <path d="M4 3h11v8H4zM1 2l3 2" fill="none" stroke="#fff" />
            <rect x="6" y="5" width="8" height="5" fill="#fff" />
          </svg>
          <Wifi size={15} className="ml-[20px] text-[#bbb]" />
          <Volume2 size={16} className="ml-[5px] text-[#ddd]" />
          <span className="ml-[9px] text-[14px]">中</span>
          <div className="ml-[15px] flex h-[16px] w-[15px] -rotate-[8deg] items-center justify-center rounded-[2px] bg-[#f04818] font-['Liberation_Sans',sans-serif] text-[13px] font-bold text-white">S</div>
          <div className="ml-[13px] flex w-[72px] flex-col items-center gap-[6px] text-[13px] text-[#e8e8e8]">
            <span className="font-['Liberation_Sans',sans-serif]">22:20</span>
            <span className="whitespace-nowrap font-['Liberation_Sans',sans-serif]">2017/6/15</span>
          </div>
          <div className="relative ml-[11px] mr-[25px] h-[18px] w-[16px]">
            <svg width="16" height="18" viewBox="0 0 16 18">
              <path d="M0 1h16v12H5l-2 4v-4H0z" fill="#fff" />
              <path d="M3 4h10M3 7h10M3 10h10" stroke="#04131b" />
            </svg>
            <div className="absolute -bottom-[6px] -right-[9px] flex h-[17px] w-[17px] items-center justify-center rounded-full border border-[#888] bg-[#333] font-['Liberation_Sans',sans-serif] text-[12px] font-bold text-white">6</div>
          </div>
        </div>
      </div>

      {/* red highlight box drawn over the grid */}
      <div className="absolute left-[636px] top-[176px] h-[105px] w-[97px] border-[3px] border-[#f00000]" />

      {/* floating badge cut off by the top of the screen */}
      <div className="absolute -top-[26px] left-[1108px] flex h-[45px] w-[45px] items-end justify-center rounded-full border-[3px] border-[#dfe8df] bg-[#3fae4a] pb-[3px] text-[13px] font-bold text-white shadow-[0_1px_3px_rgba(0,0,0,0.4)]">
        57
      </div>

      {/* floating IME bar */}
      <div className="absolute left-[947px] top-[19px] flex h-[24px] w-[165px] items-center border border-[#c4d2e4] bg-[#fbfcfe] pl-[14px] text-[#1f74c8]">
        <span className="text-[15px] font-bold">中</span>
        <span className="ml-[8px] text-[14px] font-bold leading-none">°,</span>
        <Mic size={15} strokeWidth={2.6} className="ml-[6px]" />
        <Keyboard size={16} strokeWidth={2.2} className="ml-[6px]" />
        <User size={15} className="ml-[6px] fill-[#b8c4d0] text-[#b8c4d0]" />
        <Shirt size={15} className="ml-[6px] fill-[#1f74c8]" />
        <Wrench size={15} className="ml-[5px] fill-[#1f74c8]" />
      </div>
      <div className="absolute left-[928px] top-[17px] flex h-[27px] w-[28px] -rotate-[8deg] items-center justify-center rounded-[4px] bg-[#f04818] font-['Liberation_Sans',sans-serif] text-[26px] font-bold text-white">
        S
      </div>
    </div>
  );
}
